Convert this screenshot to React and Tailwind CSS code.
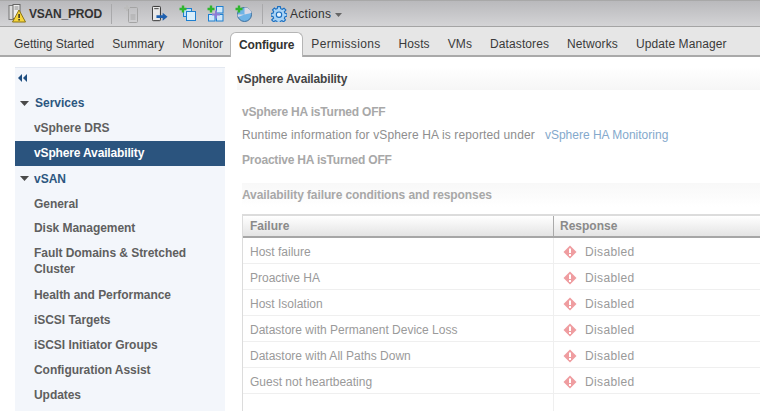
const tabs = [
  { label: 'Getting Started', spacing: 'tracking-[-0.03px]' },
  { label: 'Summary', spacing: 'tracking-[0.1px]' },
  { label: 'Monitor', spacing: 'tracking-[0.1px]' },
  { label: 'Configure', active: true },
  { label: 'Permissions', spacing: 'tracking-[0.35px]' },
  { label: 'Hosts', spacing: 'tracking-[0.1px]' },
  { label: 'VMs', spacing: 'tracking-[0.1px]' },
  { label: 'Datastores', spacing: 'tracking-[0.1px]' },
  { label: 'Networks', spacing: 'tracking-[0.1px]' },
  { label: 'Update Manager', spacing: 'tracking-[0.1px]' },
];

const rows = [
  'Host failure',
  'Proactive HA',
  'Host Isolation',
  'Datastore with Permanent Device Loss',
  'Datastore with All Paths Down',
  'Guest not heartbeating',
];

// bottom padding differs by a pixel on a couple of rows in the original tree
const vsanItems = [
  { lines: ['General'], pad: 'pb-[4px]' },
  { lines: ['Disk Management'], pad: 'pb-[5px]' },
  { lines: ['Fault Domains & Stretched', 'Cluster'], pad: 'pb-[6px]' },
  { lines: ['Health and Performance'], pad: 'pb-[5px]' },
  { lines: ['iSCSI Targets'], pad: 'pb-[5px]' },
  { lines: ['iSCSI Initiator Groups'], pad: 'pb-[5px]' },
  { lines: ['Configuration Assist'], pad: 'pb-[5px]' },
  { lines: ['Updates'], pad: 'pb-[5px]' },
];

function Caret() {
  return (
    <svg width="9" height="5" viewBox="0 0 9 5" className="shrink-0">
      <path d="M0 0h9L4.500 5z" fill="#4a4a4a" />
    </svg>
  );
}

function ClusterIcon() {
  return (
    <svg width="18" height="20" viewBox="0 0 18 20" className="shrink-0">
      <rect x="1" y="1.500" width="7" height="14" fill="#ddd" stroke="#777" />
      <rect x="5" y="0.500" width="7" height="14" fill="#eee" stroke="#666" />
      <path d="M6.500 3h4M6.500 5h4" stroke="#888" />
      <path d="M11 6 L17.500 18 H4.500 Z" fill="#f7d63c" stroke="#8a7414" />
      <rect x="10.400" y="10" width="1.400" height="4" fill="#222" />
      <rect x="10.400" y="15" width="1.400" height="1.500" fill="#222" />
    </svg>
  );
}

function HostAddIcon() {
  return (
    <svg width="16" height="20" viewBox="0 0 16 20" className="shrink-0">
      <rect x="4.500" y="3.500" width="9" height="15" rx="1" fill="none" stroke="#a4a4a4" />
      <path d="M6.500 11h5M6.500 13h5M6.500 15h5" stroke="#a8a8a8" />
      <path d="M3 1v6M0 4h6" stroke="#bcbcbc" strokeWidth="2" />
    </svg>
  );
}

function MoveHostIcon() {
  return (
    <svg width="16" height="20" viewBox="0 0 18 20" className="shrink-0">
      <rect x="0.500" y="1.500" width="9" height="16" rx="1" fill="#e8e8e8" stroke="#222" />
      <path d="M2.500 4h5" stroke="#333" />
      <path d="M5 11.500h7V8.500l5.500 4.500L12 17.500v-3H5z" fill="#1d5fae" />
    </svg>
  );
}

function Plus() {
  return <path d="M4 0.500v7M0.500 4h7" stroke="#2fb52f" strokeWidth="2.400" />;
}

function NewVmIcon() {
  return (
    <svg width="17" height="17" viewBox="0 0 17 17" className="shrink-0">
      <rect x="4.500" y="3.500" width="8" height="8" fill="#bfe0f7" stroke="#1d7fd0" />
      <rect x="7.500" y="6.500" width="9" height="9" fill="#d8eefc" stroke="#1d7fd0" />
      <Plus />
    </svg>
  );
}

function NewVappIcon() {
  return (
    <svg width="17" height="17" viewBox="0 0 17 17" className="shrink-0">
      <rect x="9.500" y="1.500" width="6.500" height="6.500" fill="#cfe8fa" stroke="#1d7fd0" />
      <rect x="1.500" y="9.500" width="6.500" height="6.500" fill="#cfe8fa" stroke="#1d7fd0" />
      <rect x="9.500" y="9.500" width="6.500" height="6.500" fill="#cfe8fa" stroke="#1d7fd0" />
      <path d="M9 5.500v8M5 9.500h8" stroke="#8d7cd6" strokeWidth="2" />
      <Plus />
    </svg>
  );
}

function NewPoolIcon() {
  return (
    <svg width="17" height="17" viewBox="0 0 17 17" className="shrink-0">
      <circle cx="9.500" cy="9.500" r="7" fill="#6fb3e6" stroke="#3b6f9f" />
      <path d="M9.500 9.500 L16.500 8 A7 7 0 0 0 9.500 2.500 Z" fill="#d9d9e6" />
      <path d="M9.500 9.500 L3 12 A7 7 0 0 1 2.500 9.500 Z" fill="#d9d9e6" />
      <Plus />
    </svg>
  );
}

function GearIcon() {
  return (
    <svg width="16" height="16" viewBox="0 0 24 24" className="shrink-0">
      <path
        d="M10 1h4l.6 3 2.300 1 2.600-1.700 2.800 2.800L20 8.700l1 2.300 3 .6v3.800l-3 .6-1 2.300 1.700 2.600-2.800 2.800-2.600-1.700-2.300 1-.6 2.500h-4l-.6-2.500-2.300-1-2.600 1.700-2.800-2.800L4 18l-1-2.300-3-.6v-3.800l3-.6 1-2.300-1.700-2.600 2.800-2.800L7 4.700l2.400-1z"
        fill="#a9d3f5"
        stroke="#1b6fc0"
        strokeWidth="1.700"
      />
      <circle cx="12" cy="13" r="4" fill="#e8f3fc" stroke="#1b6fc0" strokeWidth="1.700" />
    </svg>
  );
}

function AlertIcon() {
  return (
    <svg width="14" height="14" viewBox="0 0 14 14" className="shrink-0">
      <path d="M7 0.500 13.500 7 7 13.500 0.500 7z" fill="#ef9da0" />
      <rect x="6" y="3.500" width="2" height="4.500" fill="#fff" />
      <rect x="6" y="9" width="2" height="2" fill="#fff" />
    </svg>
  );
}

function NavItem({ lines, pad = 'pb-[5px]' }) {
  return (
    <div className={`pl-[19px] pt-[4px] ${pad} text-[#5f5f5f] font-bold leading-[16px] tracking-[-0.05px]`}>
      {lines.map((line) => (
        <div key={line}>{line}</div>
      ))}
    </div>
  );
}

function ToolCell({ children }) {
  return <div className="w-[28px] flex justify-center">{children}</div>;
}

export default function App() {
  return (
    <div className="w-[760px] h-[411px] overflow-hidden bg-white text-[12px] font-['Liberation_Sans',Arial,sans-serif]">
      {/* Title bar with actions */}
      <div className="h-[27px] flex items-center pl-[8px] border-t border-b border-t-[#a8a8a8] border-b-[#a4a4a4] bg-gradient-to-b from-[#b9b9bc] to-[#d4d4d6]">
        <ClusterIcon />
        <span className="ml-[3px] font-bold text-[#333] tracking-[-0.2px]">VSAN_PROD</span>
        <div className="ml-[9px] w-px h-[20px] bg-[#a9a9ab]" />
        <div className="ml-[6px] flex items-center">
          <ToolCell><HostAddIcon /></ToolCell>
          <ToolCell><MoveHostIcon /></ToolCell>
          <ToolCell><NewVmIcon /></ToolCell>
          <ToolCell><NewVappIcon /></ToolCell>
          <ToolCell><NewPoolIcon /></ToolCell>
        </div>
        <div className="ml-[4px] w-px h-[20px] bg-[#a9a9ab]" />
        <div className="ml-[8px] flex items-center gap-[3px] text-[#333] tracking-[0.3px]">
          <GearIcon />
          <span>Actions</span>
          <svg width="7" height="4" viewBox="0 0 7 4" className="ml-[1px] mt-[2px]">
            <path d="M0 0h7L3.500 4z" fill="#666" />
          </svg>
        </div>
      </div>

      {/* Tabs */}
      <div className="h-[30px] flex items-end pl-[5px] bg-[#e6e6e6] border-b-2 border-b-[#a9a9a9] whitespace-nowrap">
        {tabs.map((tab) =>
          tab.active ? (
            <div
              key={tab.label}
              className="h-[25px] -mb-[2px] -ml-[2px] -mr-px px-[8px] flex items-center bg-white border border-b-0 border-[#b5b5b5] rounded-t-[6px] font-bold text-[#333] tracking-[-0.15px]"
            >
              {tab.label}
            </div>
          ) : (
            <div key={tab.label} className={`h-[28px] px-[9px] pt-[6px] flex items-center text-[#3a3a3a] ${tab.spacing}`}>
              {tab.label}
            </div>
          ),
        )}
      </div>

      <div className="flex pt-[10px] pl-[15px]">
        {/* Sidebar */}
        <aside className="w-[210px] h-[400px] shrink-0 bg-[#f3f6fb] border-t border-[#e3e8f0] pt-[4px]">
          <div className="h-[12px] pl-[3px] flex items-center">
            <svg width="9" height="8" viewBox="0 0 9 8">
              <path d="M4 0v8L0 4zM9 0v8L5 4z" fill="#1f4e80" />
            </svg>
          </div>
          <div className="mt-[6px] pl-[5px] h-[26px] flex items-center gap-[6px] font-bold text-[#2c5680]">
            <Caret />
            <span>Services</span>
          </div>
          <NavItem lines={['vSphere DRS']} />
          <div className="pl-[19px] pt-[4px] pb-[5px] leading-[16px] font-bold text-white bg-[#2b547e] tracking-[-0.15px]">vSphere Availability</div>
          <div className="pl-[5px] h-[25px] mb-px flex items-center gap-[5px] font-bold text-[#2c5680]">
            <Caret />
            <span>vSAN</span>
          </div>
          {vsanItems.map((item) => (
            <NavItem key={item.lines[0]} lines={item.lines} pad={item.pad} />
          ))}
        </aside>

        {/* Main content */}
        <main className="ml-[12px] flex-1 min-w-0">
          <div className="h-[23px] flex items-center font-bold text-[#444] tracking-[-0.15px] bg-gradient-to-b from-white to-[#f6f6f6]">
            vSphere Availability
          </div>
          <div className="pl-[5px] text-[#a8a8a8]">
            <div className="mt-[14px] h-[16px] leading-[16px] font-bold tracking-[-0.2px]">vSphere HA isTurned OFF</div>
            <div className="mt-[7px] h-[16px] leading-[16px] text-[#8e8e8e]">
              <span className="tracking-[0.13px]">Runtime information for vSphere HA is reported under</span>
              <span className="ml-[10px] text-[#84a9cc]">vSphere HA Monitoring</span>
            </div>
            <div className="mt-[9px] h-[16px] leading-[16px] font-bold tracking-[-0.2px]">Proactive HA isTurned OFF</div>
            <div className="mt-[15px] h-[24px] flex items-center font-bold tracking-[-0.1px] bg-gradient-to-b from-[#f8f8f8] to-white">
              Availability failure conditions and responses
            </div>

            {/* Failure table */}
            <div className="mt-[7px] border-l border-t-2 border-[#dcdcdc] text-[#9a9a9a]">
              <div className="h-[22px] flex font-bold text-[#8a8a8a] bg-gradient-to-b from-white to-[#e4e4e4] border-b-2 border-b-[#a6a6a6]">
                <div className="w-[311px] pl-[7px] flex items-center border-r border-r-[#aaa]">Failure</div>
                <div className="pl-[6px] flex items-center">Response</div>
              </div>
              {rows.map((row) => (
                <div key={row} className="h-[26px] flex border-b border-b-[#efefef]">
                  <div className="w-[311px] pl-[7px] pt-[2px] flex items-center border-r border-r-[#efefef]">{row}</div>
                  <div className="pl-[9px] pt-[2px] flex items-center gap-[8px]">
                    <AlertIcon />
                    <span className="tracking-[0.35px]">Disabled</span>
                  </div>
                </div>
              ))}
              <div className="h-[26px] flex">
                <div className="w-[311px] border-r border-r-[#efefef]" />
              </div>
            </div>
          </div>
        </main>
      </div>
    </div>
  );
}
